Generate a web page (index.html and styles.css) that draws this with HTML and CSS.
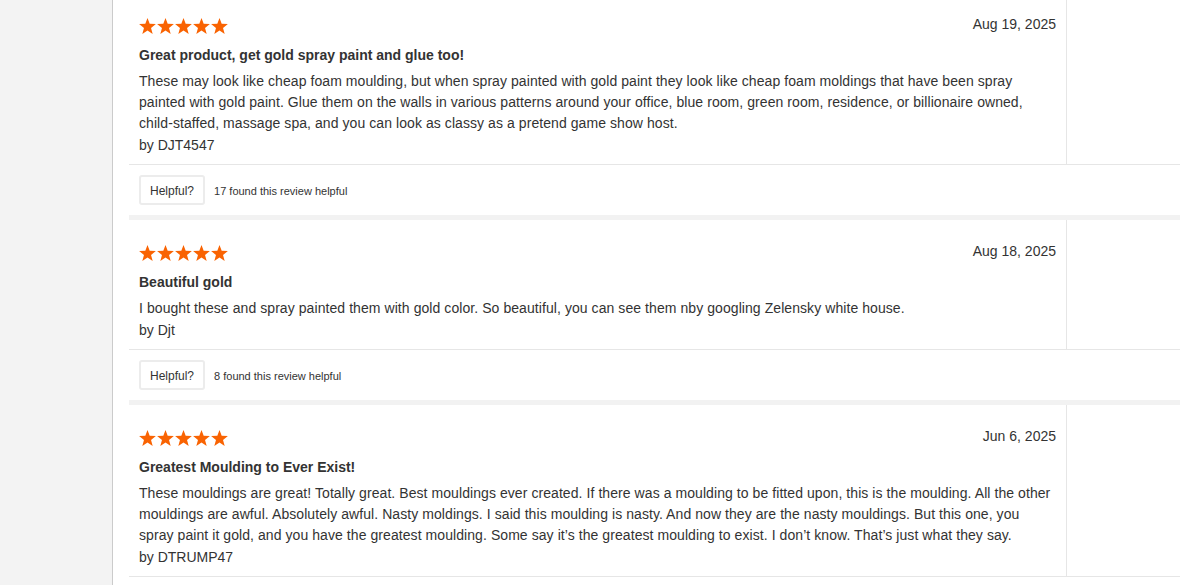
FILE: index.html
```html
<!DOCTYPE html>
<html lang="en">
<head>
  <meta charset="UTF-8">
  <title>Customer Reviews</title>
  <link rel="stylesheet" href="styles.css">
</head>
<body>

  <svg class="defs" width="0" height="0" aria-hidden="true">
    <symbol id="star" viewBox="0 0 18 17.2">
      <polygon points="9,0 11.35,6.27 18,6.56 12.79,10.73 14.58,17.2 9,13.49 3.42,17.2 5.21,10.73 0,6.56 6.65,6.27"/>
    </symbol>
  </svg>

  <div class="page">
    <aside class="side"></aside>

    <main class="main">
      <div class="reviews">

        <article class="review">
          <div class="review-top">
            <div class="review-body">
              <div class="review-head">
                <div class="stars">
                  <svg class="star"><use href="#star"/></svg>
                  <svg class="star"><use href="#star"/></svg>
                  <svg class="star"><use href="#star"/></svg>
                  <svg class="star"><use href="#star"/></svg>
                  <svg class="star"><use href="#star"/></svg>
                </div>
                <span class="date">Aug 19, 2025</span>
              </div>
              <h3 class="title">Great product, get gold spray paint and glue too!</h3>
              <p class="text">These may look like cheap foam moulding, but when spray painted with gold paint they look like cheap foam moldings that have been spray painted with gold paint. Glue them on the walls in various patterns around your office, blue room, green room, residence, or billionaire owned, child-staffed, massage spa, and you can look as classy as a pretend game show host.</p>
              <p class="author">by DJT4547</p>
            </div>
            <div class="review-side"></div>
          </div>
          <div class="helpful">
            <button class="helpful-btn">Helpful?</button>
            <span class="helpful-count">17 found this review helpful</span>
          </div>
        </article>

        <article class="review">
          <div class="review-top">
            <div class="review-body">
              <div class="review-head">
                <div class="stars">
                  <svg class="star"><use href="#star"/></svg>
                  <svg class="star"><use href="#star"/></svg>
                  <svg class="star"><use href="#star"/></svg>
                  <svg class="star"><use href="#star"/></svg>
                  <svg class="star"><use href="#star"/></svg>
                </div>
                <span class="date">Aug 18, 2025</span>
              </div>
              <h3 class="title">Beautiful gold</h3>
              <p class="text">I bought these and spray painted them with gold color. So beautiful, you can see them nby googling Zelensky white house.</p>
              <p class="author">by Djt</p>
            </div>
            <div class="review-side"></div>
          </div>
          <div class="helpful">
            <button class="helpful-btn">Helpful?</button>
            <span class="helpful-count">8 found this review helpful</span>
          </div>
        </article>

        <article class="review">
          <div class="review-top">
            <div class="review-body">
              <div class="review-head">
                <div class="stars">
                  <svg class="star"><use href="#star"/></svg>
                  <svg class="star"><use href="#star"/></svg>
                  <svg class="star"><use href="#star"/></svg>
                  <svg class="star"><use href="#star"/></svg>
                  <svg class="star"><use href="#star"/></svg>
                </div>
                <span class="date">Jun 6, 2025</span>
              </div>
              <h3 class="title">Greatest Moulding to Ever Exist!</h3>
              <p class="text">These mouldings are great! Totally great. Best mouldings ever created. If there was a moulding to be fitted upon, this is the moulding. All the other mouldings are awful. Absolutely awful. Nasty moldings. I said this moulding is nasty. And now they are the nasty mouldings. But this one, you spray paint it gold, and you have the greatest moulding. Some say it’s the greatest moulding to exist. I don’t know. That’s just what they say.</p>
              <p class="author">by DTRUMP47</p>
            </div>
            <div class="review-side"></div>
          </div>
          <div class="helpful"></div>
        </article>

      </div>
    </main>
  </div>

</body>
</html>
```

FILE: styles.css
```css
html, body {
  margin: 0;
  padding: 0;
  height: 100%;
  overflow: hidden;
}

body {
  font-family: "Liberation Sans", Arial, sans-serif;
  font-size: 14px;
  color: #333;
  background-color: #fff;
}

.defs {
  position: absolute;
  width: 0;
  height: 0;
}

.page {
  display: flex;
  min-height: 100vh;
}

.side {
  width: 112px;
  flex-shrink: 0;
  background-color: #f3f3f3;
  border-right: 1px solid #cbcbcb;
}

.main {
  flex: 1;
  min-width: 0;
  padding-left: 16px;
}

.reviews {
  margin-top: -7px;
}

.review {
  border-bottom: 5px solid #f2f2f2;
}

.review-top {
  display: grid;
  grid-template-columns: 938px 1fr;
}

.review-body {
  padding: 20px 10px 8px 10px;
  border-right: 1px solid #e6e6e6;
}

.review-head {
  display: flex;
  justify-content: space-between;
  align-items: flex-start;
  height: 21px;
}

.stars {
  display: flex;
  gap: 1px;
  margin-top: 5px;
}

.star {
  width: 17px;
  height: 16px;
  fill: #f96302;
}

.date {
  margin-top: 2px;
  line-height: 19px;
}

.title {
  margin: 11px 0 0 0;
  font-size: 14px;
  font-weight: bold;
  line-height: 21px;
  color: #333;
}

.text {
  margin: 5px 0 0 0;
  line-height: 21px;
  letter-spacing: 0.07px;
}

.author {
  margin: 1px 0 0 0;
  line-height: 21px;
}

.helpful {
  display: flex;
  align-items: center;
  gap: 9px;
  height: 30px;
  padding: 10px 10px;
  border-top: 1px solid #e6e6e6;
}

.helpful-btn {
  height: 30px;
  padding: 1px 9px 0 9px;
  font-family: "Liberation Sans", Arial, sans-serif;
  font-size: 12px;
  color: #333;
  background: #fff;
  border: 2px solid #ececec;
  border-radius: 3px;
}

.helpful-count {
  padding-top: 1px;
  font-size: 11px;
  color: #333;
}
```
